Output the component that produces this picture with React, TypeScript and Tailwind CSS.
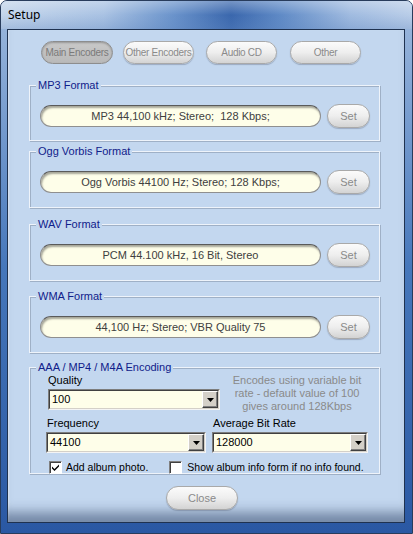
import React from "react";

const font = { fontFamily: '"Liberation Sans", Arial, sans-serif' };

function Pill({ children, className = "", pressed = false }: { children: React.ReactNode; className?: string; pressed?: boolean }) {
  return (
    <div
      className={
        "flex items-center justify-center whitespace-nowrap rounded-full border leading-none " +
        (pressed
          ? "border-[#8d8d8d] bg-gradient-to-b from-[#c9c9c9] to-[#b9b9b9] text-[#7a7a7a] shadow-[inset_0_1px_2px_rgba(0,0,0,0.25)] "
          : "border-[#a9a9a9] bg-gradient-to-b from-[#fbfbfb] via-[#eeeeee] to-[#d3d3d3] text-[#8a8a8a] shadow-[0_1px_1px_rgba(80,90,110,0.35)] ") +
        className
      }
    >
      {children}
    </div>
  );
}

function Field({ text }: { text: string }) {
  return (
    <div className="flex h-[22px] w-[281px] items-center justify-center whitespace-pre rounded-full border border-[#8f8f8f] border-t-[#5a5a5a] bg-[#fefee9] text-[11px] text-[#404040] shadow-[inset_1px_2px_2px_rgba(0,0,0,0.35)]">
      {text}
    </div>
  );
}

function Group({ label, className = "", children }: { label: string; className?: string; children: React.ReactNode }) {
  return (
    <div className={"relative ml-[21px] w-[351px] border border-[#eef3fa] shadow-[inset_1px_1px_0_#9fb0c6,1px_1px_0_#9fb0c6] " + className}>
      <div className="absolute -top-[8px] left-[6px] bg-[#c3d7ef] px-[2px] text-[11px] leading-[14px] text-[#10208a]">{label}</div>
      {children}
    </div>
  );
}

function FormatGroup({ label, text, className }: { label: string; text: string; className: string }) {
  return (
    <Group label={label} className={"h-[57px] " + className}>
      <div className="flex items-center gap-[6px] pl-[10px] pt-[18px]">
        <Field text={text} />
        <Pill className="h-[24px] w-[43px] text-[11px]">Set</Pill>
      </div>
    </Group>
  );
}

function Combo({ value, className }: { value: string; className: string }) {
  return (
    <div className={"flex h-[21px] border border-[#7d7d7d] border-b-[#f4f4f4] border-r-[#f4f4f4] " + className}>
      <div className="flex flex-1 border border-[#404040] border-b-[#d4d0c8] border-r-[#d4d0c8] bg-[#fefee9]">
        <div className="flex flex-1 items-center pl-[2px] text-[11px] text-black">{value}</div>
        <div className="flex w-[16px] items-center justify-center border border-[#ffffff] border-b-[#404040] border-r-[#404040] bg-[#d4d0c8] shadow-[inset_-1px_-1px_0_#808080]">
          <svg width="7" height="4" viewBox="0 0 7 4">
            <path d="M0 0H7L3.5 4Z" fill="#000" />
          </svg>
        </div>
      </div>
    </div>
  );
}

function Check({ checked }: { checked: boolean }) {
  return (
    <div className="flex h-[13px] w-[13px] items-center justify-center border border-[#808080] border-b-[#ffffff] border-r-[#ffffff] bg-white shadow-[inset_1px_1px_0_#404040]">
      {checked && (
        <svg width="7" height="7" viewBox="0 0 7 7">
          <path d="M0 2.5L2.5 5L7 0.5V2.5L2.5 7L0 4.5Z" fill="#000" />
        </svg>
      )}
    </div>
  );
}

export default function App() {
  return (
    <div
      style={font}
      className="flex h-[534px] w-[413px] flex-col overflow-hidden rounded-t-[7px] border border-[#283c5c] bg-gradient-to-b from-[#9fbade] via-[#4677bb] to-[#2a58a3]"
    >
      <div className="relative h-[28px] bg-[linear-gradient(90deg,#c3d5eb_0%,#a9c2e3_25%,#6a93cb_42%,#3a67ad_56%,#5f8ac6_68%,#a0bbe0_85%,#b9cde8_100%)]">
        <div className="absolute inset-0 bg-gradient-to-b from-white/30 via-transparent to-[#5f86bf]/30" />
        <div className="relative pl-[7px] pt-[6px] text-[12px] leading-[16px] text-black" style={{ fontFamily: '"Noto Sans", "Open Sans", sans-serif' }}>
          Setup
        </div>
      </div>
      <div className="ml-[6px] mr-[7px] flex h-[494px] flex-col border border-[#1f3250] bg-[#c3d7ef] shadow-[inset_0_-18px_12px_-8px_rgba(40,60,95,0.5),inset_2px_0_2px_-1px_rgba(255,255,255,0.5)]">
        <div className="mt-[11px] flex pl-[33px] text-[10px] tracking-[-0.3px]">
          <Pill pressed className="h-[23px] w-[72px]">Main Encoders</Pill>
          <Pill className="ml-[10px] h-[23px] w-[71px]">Other Encoders</Pill>
          <Pill className="ml-[12px] h-[23px] w-[71px]">Audio CD</Pill>
          <Pill className="ml-[13px] h-[23px] w-[71px]">Other</Pill>
        </div>

        <FormatGroup label="MP3 Format" text="MP3 44,100 kHz; Stereo;  128 Kbps;" className="mt-[21px] !h-[56px]" />
        <FormatGroup label="Ogg Vorbis Format" text="Ogg Vorbis 44100 Hz; Stereo; 128 Kbps;" className="mt-[10px]" />
        <FormatGroup label="WAV Format" text="PCM 44.100 kHz, 16 Bit, Stereo" className="mt-[16px]" />
        <FormatGroup label="WMA Format" text="44,100 Hz; Stereo; VBR Quality 75" className="mt-[15px]" />

        <Group label="AAA / MP4 / M4A Encoding" className="mt-[14px] h-[107px]">
          <div className="flex flex-col pt-[6px]">
            <div className="flex">
              <div className="flex w-[190px] flex-col pl-[18px]">
                <div className="h-[15px] text-[11px] leading-[13px] text-black">Quality</div>
                <Combo value="100" className="w-[172px]" />
              </div>
              <div className="ml-[12px] w-[130px] text-center text-[11px] leading-[13px] text-[#8a8a8a]">
                Encodes using variable bit rate - default value of 100 gives around 128Kbps
              </div>
            </div>
            <div className="mt-[4px] flex">
              <div className="flex w-[182px] flex-col pl-[16px]">
                <div className="h-[15px] pl-[1px] text-[11px] leading-[13px] text-black">Frequency</div>
                <Combo value="44100" className="w-[160px]" />
              </div>
              <div className="flex flex-col">
                <div className="h-[15px] pl-[1px] text-[11px] leading-[13px] text-black">Average Bit Rate</div>
                <Combo value="128000" className="w-[156px]" />
              </div>
            </div>
            <div className="mt-[7px] flex items-center pl-[19px] text-[10.5px] text-black">
              <Check checked />
              <span className="ml-[4px]">Add album photo.</span>
              <div className="ml-[21px]">
                <Check checked={false} />
              </div>
              <span className="ml-[5px]">Show album info form if no info found.</span>
            </div>
          </div>
        </Group>

        <div className="mt-[12px] flex pl-[158px]">
          <Pill className="h-[24px] w-[72px] text-[11px]">Close</Pill>
        </div>
      </div>
    </div>
  );
}
